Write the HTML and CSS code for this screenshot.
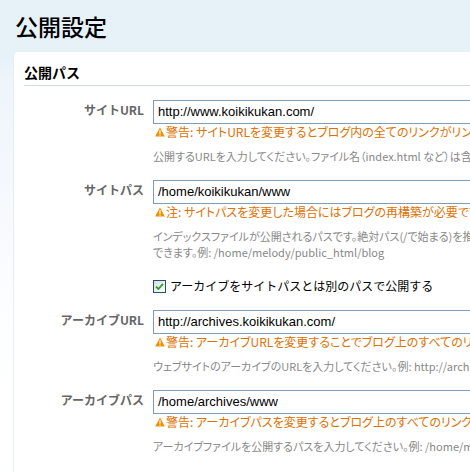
FILE: index.html
```html
<!DOCTYPE html>
<html lang="ja">
<head>
<meta charset="utf-8">
<title>公開設定</title>
<link rel="stylesheet" href="styles.css">
</head>
<body>
<header class="page-header">
  <h1 class="page-title">公開設定</h1>
</header>
<main class="card">
  <h2 class="section-title">公開パス</h2>
  <div class="fields">
    <div class="field">
      <label class="field-label">サイトURL</label>
      <div class="field-body">
        <div class="text-input">http://www.koikikukan.com/</div>
        <p class="warning"><svg class="warn-icon" viewBox="0 0 10 10" width="10" height="10"><path d="M5 0.5 L9.8 9.5 H0.2 Z" fill="#f09000"/><rect x="4.4" y="3.2" width="1.2" height="3.6" fill="#fff"/><rect x="4.4" y="7.6" width="1.2" height="1.2" fill="#fff"/></svg>警告: サイトURLを変更するとブログ内の全てのリンクがリンク切れになります。</p>
        <p class="help">公開するURLを入力してください。ファイル名（index.html など）は含めないでください。</p>
      </div>
    </div>
    <div class="field">
      <label class="field-label">サイトパス</label>
      <div class="field-body">
        <div class="text-input">/home/koikikukan/www</div>
        <p class="warning"><svg class="warn-icon" viewBox="0 0 10 10" width="10" height="10"><path d="M5 0.5 L9.8 9.5 H0.2 Z" fill="#f09000"/><rect x="4.4" y="3.2" width="1.2" height="3.6" fill="#fff"/><rect x="4.4" y="7.6" width="1.2" height="1.2" fill="#fff"/></svg>注: サイトパスを変更した場合にはブログの再構築が必要です。</p>
        <p class="help">インデックスファイルが公開されるパスです。絶対パス(/で始まる)を推奨しますが、相対パスも指定<br>できます。例: /home/melody/public_html/blog</p>
      </div>
    </div>
    <div class="field field-check">
      <div class="field-label"></div>
      <div class="field-body">
        <label class="check-row"><span class="checkbox"><svg viewBox="0 0 9 9" width="9" height="9"><path d="M1 4.6 L3.4 7 L8 1.8" fill="none" stroke="#2f9a2f" stroke-width="1.8"/></svg></span>アーカイブをサイトパスとは別のパスで公開する</label>
      </div>
    </div>
    <div class="field">
      <label class="field-label">アーカイブURL</label>
      <div class="field-body">
        <div class="text-input">http://archives.koikikukan.com/</div>
        <p class="warning"><svg class="warn-icon" viewBox="0 0 10 10" width="10" height="10"><path d="M5 0.5 L9.8 9.5 H0.2 Z" fill="#f09000"/><rect x="4.4" y="3.2" width="1.2" height="3.6" fill="#fff"/><rect x="4.4" y="7.6" width="1.2" height="1.2" fill="#fff"/></svg>警告: アーカイブURLを変更することでブログ上のすべてのリンクが切れます。</p>
        <p class="help">ウェブサイトのアーカイブのURLを入力してください。例: http://archives.example.com/</p>
      </div>
    </div>
    <div class="field">
      <label class="field-label">アーカイブパス</label>
      <div class="field-body">
        <div class="text-input">/home/archives/www</div>
        <p class="warning"><svg class="warn-icon" viewBox="0 0 10 10" width="10" height="10"><path d="M5 0.5 L9.8 9.5 H0.2 Z" fill="#f09000"/><rect x="4.4" y="3.2" width="1.2" height="3.6" fill="#fff"/><rect x="4.4" y="7.6" width="1.2" height="1.2" fill="#fff"/></svg>警告: アーカイブパスを変更するとブログ上のすべてのリンクが切れます。</p>
        <p class="help">アーカイブファイルを公開するパスを入力してください。例: /home/melody/public_html/archives</p>
      </div>
    </div>
  </div>
</main>
</body>
</html>
```
FILE: styles.css
```css
html, body {
  margin: 0;
  padding: 0;
}
body {
  width: 470px;
  height: 472px;
  overflow: hidden;
  font-family: "Liberation Sans", "Noto Sans CJK JP", sans-serif;
  color: #000;
  background: linear-gradient(to bottom, #e6f1f8 0, #e6f1f8 52px, #eef5fb 80px, #f6f9fd 200px, #fcfdff 300px, #fff 400px);
}
.page-header {
  height: 52px;
  box-sizing: border-box;
  padding: 10px 0 0 15px;
}
.page-title {
  margin: 0;
  font-family: "Noto Sans CJK JP", sans-serif;
  font-size: 23px;
  font-weight: 500;
  line-height: 32px;
}
.card {
  display: block;
  margin-left: 13px;
  height: 420px;
  background: #fff;
  border-top-left-radius: 5px;
  border-left: 1px solid #e4eef5;
  padding: 9px 0 0 10px;
  box-sizing: border-box;
  overflow: hidden;
}
.section-title {
  margin: 0;
  font-family: "Noto Sans CJK JP", sans-serif;
  font-size: 14px;
  font-weight: 700;
  line-height: 22px;
  padding-bottom: 2px;
  border-bottom: 1px solid #d3dde6;
}
.fields {
  padding-top: 14px;
  display: flex;
  flex-direction: column;
  gap: 16px;
}
.field {
  display: grid;
  grid-template-columns: 120px 1fr;
  column-gap: 9px;
  align-items: start;
}
.field-label {
  font-family: "Noto Sans CJK JP", sans-serif;
  font-size: 12px;
  font-weight: 700;
  color: #666;
  text-align: right;
  line-height: 24px;
  margin-top: -2px;
}
.field-body {
  min-width: 0;
  white-space: nowrap;
}
.text-input {
  height: 24px;
  box-sizing: border-box;
  width: 400px;
  border: 1px solid #7f9db9;
  padding: 0 4px;
  font-size: 13px;
  line-height: 22px;
  color: #000;
}
.warning {
  margin: 1px 0 0 0;
  font-family: "Noto Sans CJK JP", sans-serif;
  font-feature-settings: "palt";
  font-size: 12px;
  line-height: 14px;
  color: #e07000;
  display: flex;
  align-items: center;
  gap: 1px;
}
.warn-icon {
  flex: none;
  margin-left: 2px;
}
.help {
  margin: 9px 0 0 0;
  font-family: "Noto Sans CJK JP", sans-serif;
  font-feature-settings: "palt";
  font-size: 11px;
  line-height: 16px;
  color: #888;
  white-space: nowrap;
}
.field-check {
  margin-top: 2px;
}
.check-row {
  display: flex;
  align-items: center;
  gap: 4px;
  font-family: "Noto Sans CJK JP", sans-serif;
  font-size: 12px;
  line-height: 16px;
}
.checkbox {
  width: 13px;
  height: 13px;
  box-sizing: border-box;
  border: 1px solid #1c5180;
  background: linear-gradient(135deg, #dcdcd7, #fff);
  display: flex;
  align-items: center;
  justify-content: center;
}
```
